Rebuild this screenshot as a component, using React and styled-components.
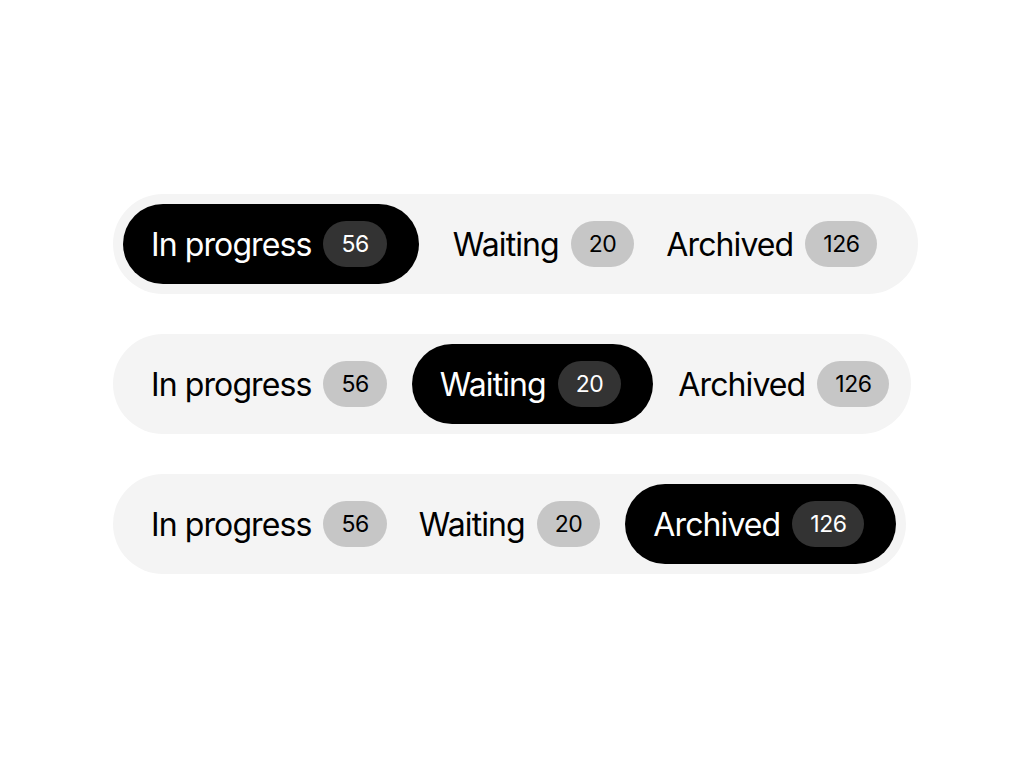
import React from 'react';
import styled, { createGlobalStyle, css } from 'styled-components';

const GlobalStyle = createGlobalStyle`
  html, body {
    margin: 0;
    padding: 0;
    background: #ffffff;
  }
  body {
    font-family: Inter, "Liberation Sans", sans-serif;
  }
`;

const Page = styled.div`
  min-height: 100vh;
  display: flex;
  flex-direction: column;
  align-items: flex-start;
  justify-content: center;
  gap: 40px;
  padding-left: 113px;
  box-sizing: border-box;
`;

const TabBar = styled.div`
  display: flex;
  align-items: center;
  height: 100px;
  padding: 0 10px;
  box-sizing: border-box;
  background: #f4f4f4;
  border-radius: 50px;
`;

const Tab = styled.div`
  display: flex;
  align-items: center;
  gap: 12px;
  height: 80px;
  box-sizing: border-box;
  border-radius: 40px;
  cursor: pointer;
  padding: 0 ${(p) => p.$pad}px;
  color: #000000;

  &:first-child {
    padding-left: 28px;
  }
  &:last-child {
    padding-right: ${(p) => p.$end}px;
  }

  ${(p) =>
    p.$active &&
    css`
      background: #000000;
      color: #ffffff;
      padding: 0 32px 0 28px;
      &:last-child {
        padding-right: 32px;
      }
      &:not(:first-child) {
        margin-left: ${p.$gap}px;
      }
      &:not(:last-child) {
        margin-right: ${p.$gap}px;
      }
    `}
`;

const Label = styled.span`
  font-size: 32px;
  font-weight: 400;
  letter-spacing: -0.9px;
  white-space: nowrap;
`;

const Count = styled.span`
  display: flex;
  align-items: center;
  justify-content: center;
  height: 46px;
  padding: 0 18px;
  border-radius: 23px;
  font-size: 23px;
  letter-spacing: -0.5px;
  background: ${(p) => (p.$active ? '#333333' : '#c6c6c6')};
  color: ${(p) => (p.$active ? '#ffffff' : '#000000')};
`;

const tabs = [
  { label: 'In progress', count: 56 },
  { label: 'Waiting', count: 20 },
  { label: 'Archived', count: 126 },
];

const Tabs = ({ active, pad = 16, gap = 9, end = 12 }) => (
  <TabBar>
    {tabs.map((t, i) => (
      <Tab key={t.label} $active={i === active} $pad={pad} $gap={gap} $end={end}>
        <Label>{t.label}</Label>
        <Count $active={i === active}>{t.count}</Count>
      </Tab>
    ))}
  </TabBar>
);

const App = () => (
  <>
    <GlobalStyle />
    <Page>
      <Tabs active={0} gap={18} end={31} />
      <Tabs active={1} />
      <Tabs active={2} />
    </Page>
  </>
);

export default App;
